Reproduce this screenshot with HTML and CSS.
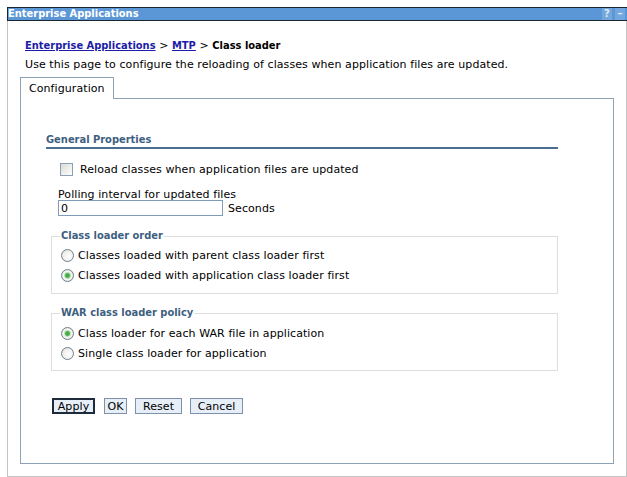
FILE: index.html
```html
<!DOCTYPE html>
<html>
<head>
<meta charset="utf-8">
<link rel="stylesheet" href="styles.css">
</head>
<body>
<div class="page">
  <div class="titlebar">
    <span class="title">Enterprise Applications</span>
    <span class="tools"><span class="tool">?</span><span class="tool tool-min">&ndash;</span></span>
  </div>
  <div class="frame">
    <div class="crumbs"><a href="#">Enterprise Applications</a> &gt; <a href="#">MTP</a> &gt; <b>Class loader</b></div>
    <div class="desc">Use this page to configure the reloading of classes when application files are updated.</div>
    <div class="tabs"><div class="tab">Configuration</div></div>
    <div class="panel">
      <div class="heading">General Properties</div>
      <label class="check-row"><input type="checkbox" class="check"><span class="lbl">Reload classes when application files are updated</span></label>
      <div class="field-label">Polling interval for updated files</div>
      <div class="field-row"><input type="text" class="text-input" value="0"><span class="lbl">Seconds</span></div>
      <fieldset class="group">
        <legend>Class loader order</legend>
        <label class="radio-row"><input type="radio" name="order" class="radio"><span class="lbl">Classes loaded with parent class loader first</span></label>
        <label class="radio-row"><input type="radio" name="order" class="radio" checked><span class="lbl">Classes loaded with application class loader first</span></label>
      </fieldset>
      <fieldset class="group group-war">
        <legend>WAR class loader policy</legend>
        <label class="radio-row"><input type="radio" name="war" class="radio" checked><span class="lbl">Class loader for each WAR file in application</span></label>
        <label class="radio-row"><input type="radio" name="war" class="radio"><span class="lbl">Single class loader for application</span></label>
      </fieldset>
      <div class="buttons">
        <button class="btn btn-apply">Apply</button>
        <button class="btn btn-ok">OK</button>
        <button class="btn btn-reset">Reset</button>
        <button class="btn btn-cancel">Cancel</button>
      </div>
    </div>
  </div>
</div>
</body>
</html>
```
FILE: styles.css
```css
html, body {
  margin: 0;
  background: #ffffff;
}
body {
  font-family: "DejaVu Sans", Verdana, sans-serif;
  font-size: 11px;
  line-height: 14px;
  letter-spacing: 0.08px;
  color: #000;
}
.page {
  padding: 7px 0 0 7px;
}
.titlebar {
  height: 12px;
  border-top: 1px solid #1b2633;
  border-bottom: 1px solid #1b2633;
  border-left: 1px solid #1b2633;
  background: #5b97d6;
  display: flex;
  align-items: center;
  justify-content: space-between;
}
.title, .crumbs a, .crumbs b, .heading, legend {
  font-family: "DejaVu Sans Condensed", "DejaVu Sans", sans-serif;
  font-stretch: condensed;
  font-weight: bold;
  letter-spacing: 0;
}
.title {
  color: #fff;
  font-size: 11px;
  line-height: 12px;
}
.tools {
  display: flex;
  gap: 3px;
  margin-right: 2px;
  height: 12px;
}
.tool {
  width: 10px;
  height: 12px;
  background: #73a7de;
  color: #dfeaf6;
  font-weight: bold;
  font-size: 10px;
  line-height: 12px;
  text-align: center;
}
.frame {
  width: 620px;
  height: 456px;
  box-sizing: border-box;
  border: 1px solid #c4c4c4;
  border-top: none;
  padding: 18px 0 0 12px;
}
.crumbs {
  margin-left: 5px;
}
.crumbs a {
  color: #1c1ca8;
  text-decoration: underline;
}
.desc {
  margin: 5px 0 0 5px;
}
.tabs {
  margin-top: 5px;
  display: flex;
}
.tab {
  position: relative;
  z-index: 1;
  width: 84px;
  height: 21px;
  margin-bottom: -1px;
  padding-left: 8px;
  border: 1px solid #8fa3b7;
  border-bottom: none;
  background: #fff;
  line-height: 21px;
}
.panel {
  width: 594px;
  height: 366px;
  box-sizing: border-box;
  border: 1px solid #8fa3b7;
  padding: 31px 0 0 25px;
}
.heading {
  width: 512px;
  color: #3e5f80;
  border-bottom: 2px solid #4b6e90;
  padding-top: 3px;
  line-height: 14px;
}
.lbl {
  padding-top: 2px;
}
.check-row {
  display: flex;
  align-items: center;
  gap: 7px;
  margin: 13px 0 0 14px;
  height: 14px;
}
.check {
  appearance: none;
  -webkit-appearance: none;
  margin: 0;
  width: 13px;
  height: 13px;
  border: 1px solid #8aa0b6;
  background: linear-gradient(135deg, #dcdcd6 0%, #f4f4f0 70%, #ffffff 100%);
  box-sizing: border-box;
}
.field-label {
  margin: 10px 0 0 12px;
  height: 14px;
  box-sizing: border-box;
  padding-top: 2px;
}
.field-row {
  display: flex;
  align-items: center;
  gap: 5px;
  margin-left: 12px;
}
.text-input {
  width: 165px;
  height: 16px;
  box-sizing: border-box;
  margin: 0;
  padding: 0 2px;
  border: 1px solid #7f9db9;
  font: 11px "DejaVu Sans", sans-serif;
  color: #000;
  background: #fff;
}
.group {
  width: 507px;
  box-sizing: border-box;
  margin: 13px 0 0 5px;
  padding: 0 0 8px 8px;
  border: 1px solid #dedede;
}
.group-war {
  margin-top: 12px;
  padding-bottom: 7px;
}
legend {
  padding: 0 1px;
  color: #3e5f80;
  line-height: 14px;
}
.radio-row {
  display: flex;
  align-items: center;
  gap: 4px;
  height: 20px;
  margin-left: 1px;
}
.radio-row:first-of-type {
  margin-top: 2px;
}
.group-war .radio-row:first-of-type {
  margin-top: 3px;
}
.radio {
  appearance: none;
  -webkit-appearance: none;
  margin: 0;
  width: 13px;
  height: 13px;
  border-radius: 50%;
  border: 1px solid #6f7f8f;
  background: radial-gradient(circle at 60% 60%, #ffffff 0%, #f0f0ec 55%, #cfcfca 100%);
  box-sizing: border-box;
}
.radio:checked {
  background: radial-gradient(circle, #3fa43f 0, #52b352 2px, #bfe3bf 3px, #f6f6f2 4px, #f0f0ec 60%, #cfcfca 100%);
}
.buttons {
  display: flex;
  gap: 8px;
  margin: 27px 0 0 6px;
}
.btn {
  height: 16px;
  margin: 0;
  padding: 1px 0 0;
  border: 1px solid #7e91a8;
  background: #e6eef8;
  font: 11px "DejaVu Sans", sans-serif;
  letter-spacing: 0.08px;
  line-height: 14px;
  color: #000;
  text-align: center;
}
.btn-apply {
  width: 43px;
  margin-right: 1px;
  border: 2px solid #1d2b3b;
  padding-top: 0;
}
.btn-ok { width: 23px; }
.btn-reset { width: 47px; }
.btn-cancel { width: 53px; }
```
